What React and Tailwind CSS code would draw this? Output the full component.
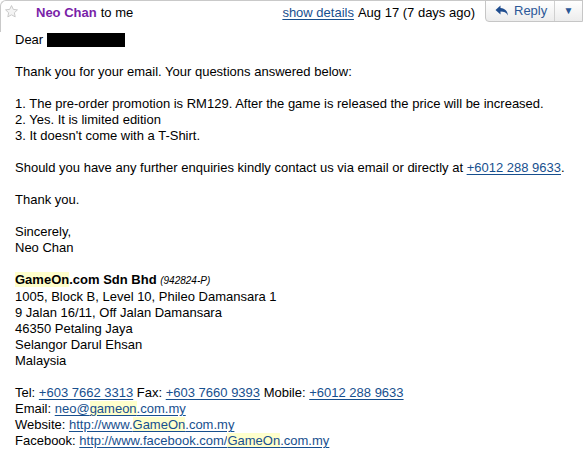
import React from 'react';

const Link = ({ children }) => (
  <a href="#" className="text-[#174f8e] underline underline-offset-[2px] decoration-[#174f8e]">
    {children}
  </a>
);

const Hl = ({ children }) => <span className="bg-[#ffffcc]">{children}</span>;

const Blank = () => <div className="h-4" />;

export default function App() {
  return (
    <div className="w-[583px] h-[452px] bg-white overflow-hidden text-[13px] leading-4 text-black" style={{ fontFamily: '"Liberation Sans", Arial, sans-serif' }}>
      {/* Header */}
      <div className="relative flex items-start h-[32px] border-t border-l border-[#c9c9c9] rounded-tl-[6px]">
        <svg width="15" height="15" viewBox="0 0 24 24" className="absolute left-[3px] top-[3px]">
          <path
            d="M12 2.5l2.9 6.1 6.6.8-4.9 4.6 1.3 6.6L12 17.3l-5.9 3.3 1.3-6.6-4.9-4.6 6.6-.8z"
            fill="#f4f4f4"
            stroke="#c4c4c4"
            strokeWidth="1.4"
            strokeLinejoin="round"
          />
        </svg>
        <div className="pl-[35px] pt-[4px] flex-1 flex">
          <span className="font-bold text-[#7a1fa8]">Neo Chan</span>
          <span className="ml-[4px]">to me</span>
        </div>
        <div className="pt-[4px] mr-[10px] flex">
          <Link>show details</Link>
          <span className="ml-[4px]">Aug 17 (7 days ago)</span>
        </div>
        <div className="flex h-[22px] -mt-px border border-[#c6c6c6] rounded-bl-[4px] bg-gradient-to-b from-white to-[#ececec]">
          <div className="flex items-center gap-[4px] w-[69px] pl-[8px] text-[#2b5797] border-r border-[#d0d0d0]">
            <svg width="16" height="14" viewBox="0 0 16 14">
              <path d="M6.5 1.5L1.5 6l5 4.5V7.6c3.5 0 5.8.9 7.5 3.9-.5-4.2-2.8-7-7.5-7.4V1.5z" fill="#1f4d8f" />
            </svg>
            <span>Reply</span>
          </div>
          <div className="flex items-center justify-center w-[27px] text-[#2b5797] text-[10px]">▼</div>
        </div>
      </div>

      {/* Body */}
      <div className="pl-[15px]">
        <div className="flex items-center">
          Dear <span className="inline-block ml-[4px] w-[78px] h-[14px] bg-black" />
        </div>
        <Blank />
        <div>Thank you for your email. Your questions answered below:</div>
        <Blank />
        <div>1. The pre-order promotion is RM129. After the game is released the price will be increased.</div>
        <div>2. Yes. It is limited edition</div>
        <div>3. It doesn't come with a T-Shirt.</div>
        <Blank />
        <div>
          Should you have any further enquiries kindly contact us via email or directly at <Link>+6012 288 9633</Link>.
        </div>
        <Blank />
        <div>Thank you.</div>
        <Blank />
        <div>Sincerely,</div>
        <div>Neo Chan</div>
        <Blank />
        <div>
          <span className="font-bold">
            <Hl>GameOn</Hl>.com Sdn Bhd
          </span>{' '}
          <span className="italic text-[10px]">(942824-P)</span>
        </div>
        <div>1005, Block B, Level 10, Phileo Damansara 1</div>
        <div>9 Jalan 16/11, Off Jalan Damansara</div>
        <div>46350 Petaling Jaya</div>
        <div>Selangor Darul Ehsan</div>
        <div>Malaysia</div>
        <Blank />
        <div>
          Tel: <Link>+603 7662 3313</Link> Fax: <Link>+603 7660 9393</Link> Mobile: <Link>+6012 288 9633</Link>
        </div>
        <div>
          Email: <Link>neo@<Hl>gameon</Hl>.com.my</Link>
        </div>
        <div>
          Website: <Link>http://www.<Hl>GameOn</Hl>.com.my</Link>
        </div>
        <div>
          Facebook: <Link>http://www.facebook.com/<Hl>GameOn</Hl>.com.my</Link>
        </div>
      </div>
    </div>
  );
}
